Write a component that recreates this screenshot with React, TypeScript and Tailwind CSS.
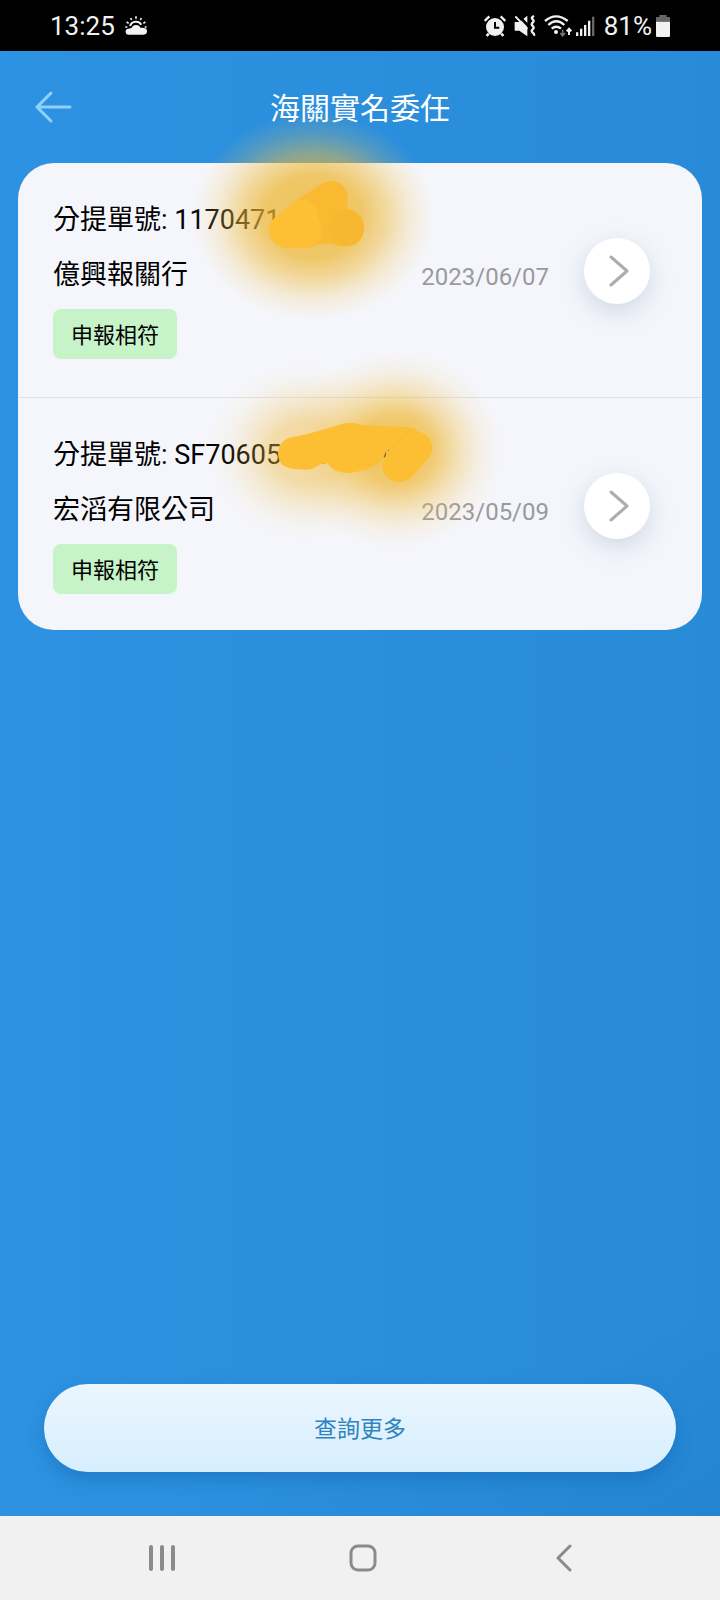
import type { ReactNode } from 'react';

type Declaration = {
  id: string;
  number: string;
  company: string;
  date: string;
  status: string;
  smudge: ReactNode;
};

function SmudgeShort() {
  return (
    <svg
      viewBox="0 0 900 690"
      aria-hidden="true"
      className="pointer-events-none absolute -top-[63px] left-[162px] h-[230px] w-[300px] overflow-visible"
    >
      <defs>
        <radialGradient id="glow-short">
          <stop offset="0" stopColor="#edb52f" stopOpacity="0.8" />
          <stop offset="0.4" stopColor="#edb52f" stopOpacity="0.72" />
          <stop offset="0.6" stopColor="#eebb40" stopOpacity="0.5" />
          <stop offset="0.8" stopColor="#f0c254" stopOpacity="0.2" />
          <stop offset="1" stopColor="#f2c860" stopOpacity="0" />
        </radialGradient>
      </defs>
      <ellipse cx="400" cy="350" rx="365" ry="312" fill="url(#glow-short)" />
      <path
        fill="#f9ba32"
        d="M268 388Q268 360 300 342Q325 318 418 256Q440 242 460 244Q494 250 502 285Q504 305 501 324Q552 340 552 384Q548 438 496 438Q470 438 458 431Q432 430 410 434Q390 446 365 444L318 443Q270 436 268 388Z"
      />
      <circle cx="498" cy="384" r="54" fill="#f7b731" />
      <path
        fill="#fdbf33"
        d="M268 388Q268 360 300 342Q320 322 350 302Q385 292 408 320Q414 340 414 352Q432 380 424 408Q412 438 378 444L318 443Q270 436 268 388Z"
      />
    </svg>
  );
}

function SmudgeLong() {
  return (
    <svg
      viewBox="0 0 960 660"
      aria-hidden="true"
      className="pointer-events-none absolute -top-[58px] left-[182px] h-[220px] w-[320px] overflow-visible"
    >
      <defs>
        <radialGradient id="glow-long">
          <stop offset="0" stopColor="#efb838" stopOpacity="0.85" />
          <stop offset="0.35" stopColor="#efb838" stopOpacity="0.7" />
          <stop offset="0.6" stopColor="#f0bf4c" stopOpacity="0.36" />
          <stop offset="0.8" stopColor="#f1c55c" stopOpacity="0.12" />
          <stop offset="1" stopColor="#f2c860" stopOpacity="0" />
        </radialGradient>
      </defs>
      <ellipse cx="320" cy="335" rx="300" ry="270" fill="url(#glow-long)" opacity="0.6" />
      <ellipse cx="590" cy="330" rx="320" ry="300" fill="url(#glow-long)" />
      <path d="M362 366Q374 372 383 362M554 352L556 332Q560 326 568 330" fill="none" stroke="#8b6414" strokeWidth="6" />
      <path
        fill="#fcbe33"
        d="M234 342Q236 304 268 293Q330 282 418 254Q450 242 484 255L620 262Q644 262 654 274Q694 286 697 322Q698 344 680 360L640 406Q614 432 582 424Q548 410 547 380Q546 366 556 350Q566 336 574 328Q556 332 554 344Q544 366 522 378Q480 396 446 399Q400 400 383 370Q360 370 342 384Q328 392 302 388Q262 388 244 372Q234 358 234 342Z"
      />
      <path fill="none" stroke="#f8b830" strokeWidth="3" d="M578 325Q600 288 634 272" />
    </svg>
  );
}

const DECLARATIONS: Declaration[] = [
  {
    id: 'a',
    number: '1170471',
    company: '億興報關行',
    date: '2023/06/07',
    status: '申報相符',
    smudge: <SmudgeShort />,
  },
  {
    id: 'b',
    number: 'SF70605',
    company: '宏滔有限公司',
    date: '2023/05/09',
    status: '申報相符',
    smudge: <SmudgeLong />,
  },
];

function StatusBar() {
  return (
    <div className="flex h-[51px] items-center justify-between bg-black pr-[50px] pl-[50px] text-[26px] leading-8 text-[#f2f2f2]">
      <div className="flex items-center gap-[10px]">
        <span>13:25</span>
        <svg viewBox="0 0 66 60" className="h-5 w-[22px]" fill="none" stroke="#f2f2f2">
          <path
            strokeWidth="5"
            d="M33 1v7M17 6l3 6M49 6l-3 6M5 18l6 4M61 18l-6 4M1 33h6M65 33h-6"
          />
          <path strokeWidth="6" d="M15 30A19 19 0 0 1 49 26" />
          <path
            fill="#f2f2f2"
            stroke="none"
            d="M12 56a9 9 0 0 1-2-18q4-2 9-1a15 15 0 0 1 28-1q4-2 9 0a10 10 0 0 1 0 20Z"
          />
        </svg>
      </div>
      <div className="flex items-center">
        {/* alarm */}
        <svg viewBox="0 0 66 66" className="h-[22px] w-[22px]">
          <circle cx="33" cy="36" r="27" fill="#f2f2f2" />
          <path d="M14 56l-6 7M52 56l6 7" stroke="#f2f2f2" strokeWidth="8" />
          <path d="M2 18L16 4M64 18L50 4" stroke="#f2f2f2" strokeWidth="7" />
          <path d="M33 21v17h13" fill="none" stroke="#000" strokeWidth="6" />
        </svg>
        {/* muted, vibrate */}
        <svg viewBox="0 0 66 66" className="ml-2 h-[22px] w-[22px]">
          <path d="M2 21h14L40 2v62L16 47H2Z" fill="#f2f2f2" />
          <path d="M10 -2l36 38" stroke="#000" strokeWidth="8" />
          <path d="M4 4l36 38" stroke="#f2f2f2" strokeWidth="6" />
          <path
            d="M60 3q-10 5-4 10t0 10t0 10t0 10t0 10t4 9"
            fill="none"
            stroke="#f2f2f2"
            strokeWidth="7"
          />
        </svg>
        {/* wifi */}
        <svg viewBox="0 0 84 66" className="ml-2 h-[22px] w-[28px]" fill="none">
          <path
            d="M3 18Q36-10 71 18M13 30Q37 8 61 30M23 41Q37 29 51 41"
            stroke="#f2f2f2"
            strokeWidth="7"
          />
          <circle cx="36" cy="51" r="6" fill="#f2f2f2" />
          <path d="M56 44v18M49 54l7 8 7-8" stroke="#777" strokeWidth="5" />
          <path d="M75 60V42M68 49l7-8 7 8" stroke="#f2f2f2" strokeWidth="6" />
        </svg>
        {/* signal */}
        <svg viewBox="0 0 57 60" className="ml-1 h-5 w-[19px]" fill="#f2f2f2">
          <path d="M0 49h7v11H0zM12 38h7v22h-7zM24 27h7v33h-7zM36 14h7v46h-7z" />
          <path d="M48 2h7v58h-7z" fill="#666" />
        </svg>
        <span className="ml-[9px]">81%</span>
        <svg viewBox="0 0 42 66" className="ml-1 h-[22px] w-[14px]">
          <path d="M10 0h22v6h10v14H0V6h10Z" fill="#666" />
          <path d="M0 20h42v42q0 4-4 4H4q-4 0-4-4Z" fill="#f2f2f2" />
        </svg>
      </div>
    </div>
  );
}

function DeclarationRow({ item }: { item: Declaration }) {
  return (
    <li className="relative flex items-start border-b border-[#dfe0e5] pt-9 pr-[52px] pb-[38px] pl-[35px] last:border-b-0 last:pb-9">
      <div className="flex flex-1 flex-col items-start gap-[13px] text-[27px] leading-[42px] text-black">
        <p>分提單號: {item.number}</p>
        <p>{item.company}</p>
        <span className="rounded-lg bg-[#c6f3c7] px-[18px] pt-[3px] text-[22px] leading-[47px]">
          {item.status}
        </span>
      </div>
      <time className="mt-[62px] mr-[35px] text-2xl leading-8 text-[#999a9e]">{item.date}</time>
      <button
        type="button"
        aria-label="查看"
        className="mt-[39px] flex h-[66px] w-[66px] items-center justify-center rounded-full bg-white shadow-[0_8px_24px_rgba(100,130,165,0.26)]"
      >
        <svg viewBox="0 0 20 32" className="ml-1 h-8 w-5" fill="none" stroke="#adadad" strokeWidth="3" strokeLinecap="round" strokeLinejoin="round">
          <path d="M2 2l16 14L2 30" />
        </svg>
      </button>
      {item.smudge}
    </li>
  );
}

export default function App() {
  return (
    <div className="flex min-h-screen flex-col bg-[#f1f1f1] font-['Roboto','Noto_Sans_CJK_TC',sans-serif]">
      <StatusBar />

      <div className="flex flex-1 flex-col bg-[linear-gradient(160deg,transparent_88%,rgba(20,90,170,0.14)),linear-gradient(90deg,#2d92e1,#278bd8)]">
        {/* Header */}
        <header className="grid h-28 grid-cols-[72px_1fr_72px] items-center text-white">
          <button type="button" aria-label="返回" className="pl-[34px]">
            <svg viewBox="0 0 38 34" className="h-[34px] w-[38px]" fill="none" stroke="#90d0fc" strokeWidth="3" strokeLinecap="round" strokeLinejoin="round">
              <path d="M17 3L3 17l14 14M3 17h33" />
            </svg>
          </button>
          <h1 className="pt-1 text-center text-3xl">海關實名委任</h1>
        </header>

        {/* Declarations */}
        <ul className="mx-[18px] rounded-[36px] bg-[#f5f6fc]">
          {DECLARATIONS.map((item) => (
            <DeclarationRow key={item.id} item={item} />
          ))}
        </ul>

        <div className="mt-auto px-11 pt-10 pb-11">
          <button
            type="button"
            className="h-[88px] w-full rounded-full bg-linear-to-b from-[#ebf6fe] to-[#d7eeff] pt-1 text-[23px] text-[#2d84be] shadow-[0_8px_16px_rgba(15,90,160,0.35)]"
          >
            查詢更多
          </button>
        </div>
      </div>

      {/* System navigation */}
      <nav className="grid h-[84px] grid-cols-3 pr-[55px] pl-[61px] text-[#8b8b8b]">
        <button type="button" aria-label="最近" className="flex items-center justify-center">
          <svg viewBox="0 0 26 28" className="h-7 w-[26px]" stroke="currentColor" strokeWidth="4" strokeLinecap="round">
            <path d="M2 3v22M13 3v22M24 3v22" />
          </svg>
        </button>
        <button type="button" aria-label="首頁" className="flex items-center justify-center">
          <svg viewBox="0 0 28 28" className="h-7 w-7" fill="none" stroke="currentColor" strokeWidth="3">
            <rect x="2" y="2" width="24" height="24" rx="7" />
          </svg>
        </button>
        <button type="button" aria-label="上一頁" className="flex items-center justify-center">
          <svg viewBox="0 0 16 28" className="h-7 w-4" fill="none" stroke="currentColor" strokeWidth="3" strokeLinecap="round" strokeLinejoin="round">
            <path d="M14 2L2 14l12 12" />
          </svg>
        </button>
      </nav>
    </div>
  );
}
